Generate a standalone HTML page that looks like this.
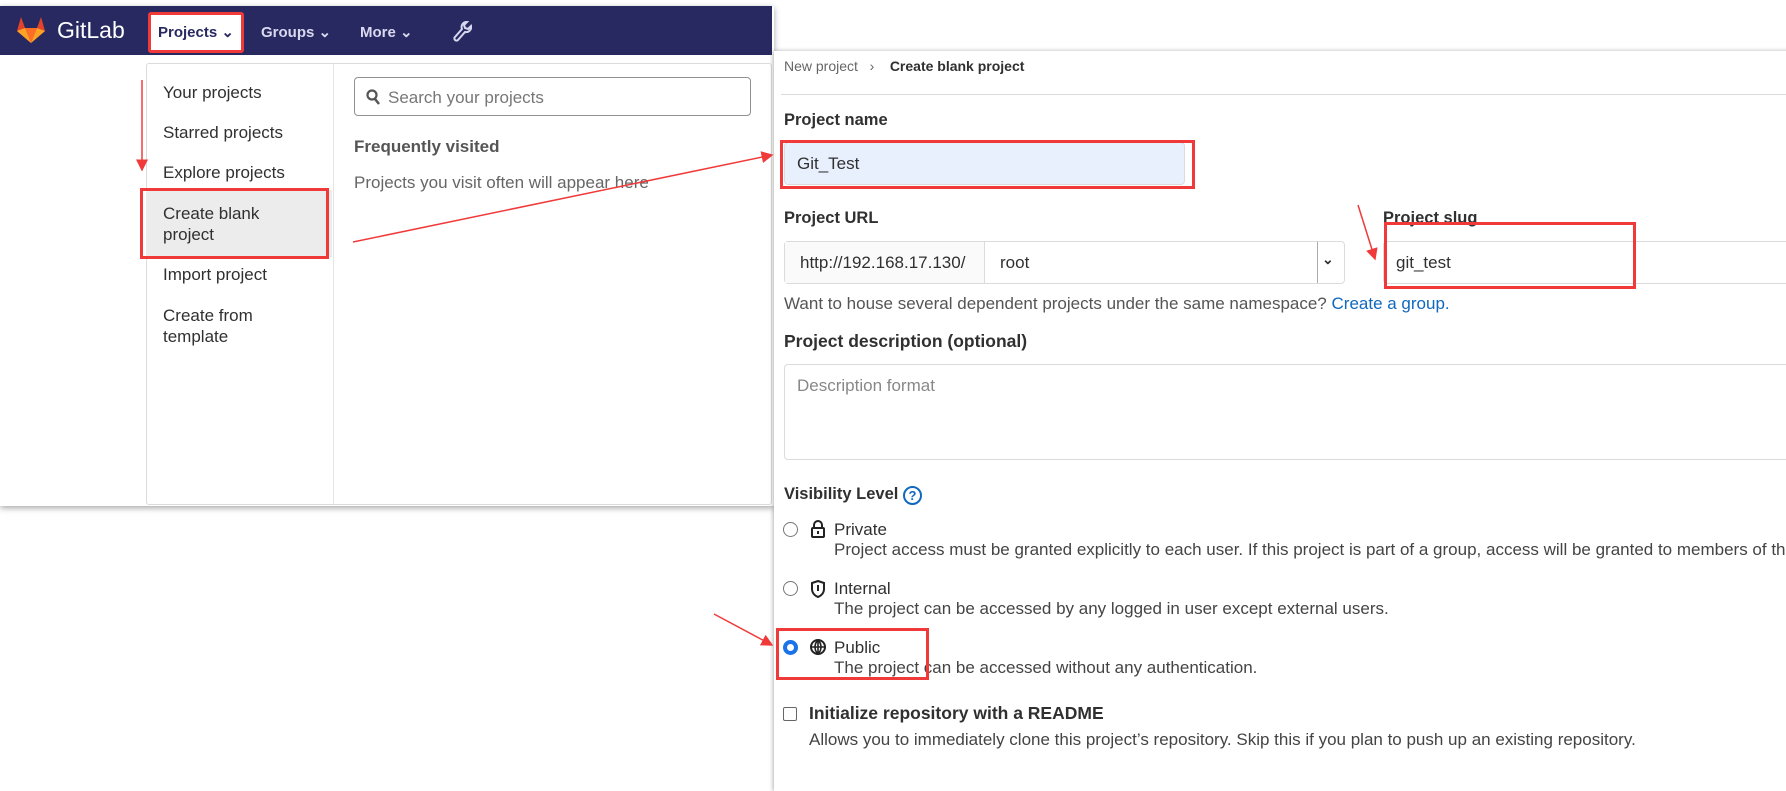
<!DOCTYPE html>
<html><head><meta charset="utf-8"><style>
*{margin:0;padding:0;box-sizing:border-box}
body{width:1786px;height:778px;background:#fff;position:relative;overflow:hidden;font-family:"Liberation Sans",sans-serif;color:#303030;font-size:17px}
.a{position:absolute;white-space:nowrap}
.lw{position:absolute;left:0;top:6px;width:774px;height:500px;background:#fff;box-shadow:0 2px 6px rgba(0,0,0,.35)}
.nav{position:absolute;left:0;top:6px;width:772px;height:49px;background:#292961}
.dd{position:absolute;left:146px;top:63px;width:626px;height:442px;border:1px solid #dbdbdb;border-radius:3px;background:#fff}
.rw{position:absolute;left:774px;top:51px;width:1020px;height:740px;background:#fff;box-shadow:-1px 0 4px rgba(0,0,0,.3)}
.red{position:absolute;border:3px solid #f03a3a}
.in{position:absolute;border:1px solid #dbdbdb;border-radius:4px;background:#fff}
.lbl{font-weight:bold;color:#303030;font-size:16.5px}
.mi{color:#303030;font-size:17px}
.sub{color:#444}
</style></head><body>
<div class="lw"></div>
<div class="nav"></div>
<svg class="a" style="left:16px;top:16px" width="30" height="28" viewBox="0 0 30 28"><path d="M15 27 L1 15 L5 1 L9 12 H21 L25 1 L29 15 Z" fill="#e24329"/><path d="M15 27 L9 12 H21Z" fill="#fc6d26"/><path d="M1 15 L9 12 L15 27Z" fill="#fca326"/><path d="M29 15 L21 12 L15 27Z" fill="#fca326"/></svg>
<div class="a" style="left:57px;top:17px;color:#fff;font-size:23px">GitLab</div>
<div class="a" style="left:148px;top:12px;width:96px;height:41px;background:#fff;border:3px solid #f03a3a;border-radius:3px"></div>
<div class="a" style="left:158px;top:23px;font-size:15px;font-weight:bold;color:#292961">Projects &#8964;</div>
<div class="a" style="left:261px;top:23px;font-size:15px;font-weight:bold;color:#d8d8ef">Groups &#8964;</div>
<div class="a" style="left:360px;top:23px;font-size:15px;font-weight:bold;color:#d8d8ef">More &#8964;</div>
<svg class="a" style="left:452px;top:20px" width="20" height="22" viewBox="0 0 20 22"><path d="M15 2 a5 5 0 0 0 -5 7 L3 17 a2 2 0 0 0 3 3 L13 12 a5 5 0 0 0 6 -6 l-3 3 -3 -1 -1 -3z" fill="none" stroke="#d8d8ef" stroke-width="2"/></svg>
<div class="dd"></div>
<div class="a" style="left:333px;top:64px;width:1px;height:440px;background:#e5e5e5"></div>
<div class="a" style="left:146px;top:190px;width:186px;height:67px;background:#ececec"></div>
<div class="red" style="left:140px;top:188px;width:189px;height:71px"></div>
<div class="a mi" style="left:163px;top:83px">Your projects</div>
<div class="a mi" style="left:163px;top:123px">Starred projects</div>
<div class="a mi" style="left:163px;top:163px">Explore projects</div>
<div class="a mi" style="left:163px;top:203px;line-height:21px">Create blank<br>project</div>
<div class="a mi" style="left:163px;top:265px">Import project</div>
<div class="a mi" style="left:163px;top:305px;line-height:21px">Create from<br>template</div>
<div class="in" style="left:354px;top:77px;width:397px;height:39px;border-color:#919191"></div>
<svg class="a" style="left:366px;top:89px" width="14" height="16" viewBox="0 0 14 16"><circle cx="6" cy="6" r="4.5" fill="none" stroke="#555" stroke-width="2.2"/><path d="M9 10 L13 15" stroke="#555" stroke-width="2.5"/></svg>
<div class="a" style="left:388px;top:88px;color:#777">Search your projects</div>
<div class="a" style="left:354px;top:137px;font-weight:bold;color:#555">Frequently visited</div>
<div class="a" style="left:354px;top:173px;color:#666">Projects you visit often will appear here</div>

<div class="rw"></div>
<div class="a" style="left:784px;top:58px;font-size:14px;color:#666">New project &nbsp;&nbsp;›&nbsp;&nbsp;&nbsp; <span style="color:#303030;font-weight:bold">Create blank project</span></div>
<div class="a" style="left:781px;top:94px;width:1010px;height:1px;background:#dbdbdb"></div>
<div class="a lbl" style="left:784px;top:111px">Project name</div>
<div class="in" style="left:784px;top:142px;width:401px;height:43px;background:#e8f0fe"></div>
<div class="a" style="left:797px;top:154px;color:#303030">Git_Test</div>
<div class="red" style="left:780px;top:140px;width:415px;height:49px"></div>
<div class="a lbl" style="left:784px;top:209px">Project URL</div>
<div class="a lbl" style="left:1383px;top:209px">Project slug</div>
<div class="in" style="left:784px;top:241px;width:561px;height:43px"></div>
<div class="a" style="left:785px;top:242px;width:200px;height:41px;background:#fafafa;border-right:1px solid #dbdbdb"></div>
<div class="a" style="left:800px;top:253px">http://192.168.17.130/</div>
<div class="a" style="left:1000px;top:253px">root</div>
<div class="a" style="left:1317px;top:242px;width:1px;height:41px;background:#aaa"></div>
<div class="a" style="left:1322px;top:251px;font-size:14px;font-weight:bold">&#8964;</div>
<div class="in" style="left:1383px;top:241px;width:420px;height:43px"></div>
<div class="a" style="left:1396px;top:253px">git_test</div>
<div class="red" style="left:1384px;top:222px;width:252px;height:67px"></div>
<div class="a" style="left:784px;top:294px;color:#555">Want to house several dependent projects under the same namespace? <span style="color:#1068bf">Create a group.</span></div>
<div class="a lbl" style="left:784px;top:331px;font-size:17.5px">Project description (optional)</div>
<div class="in" style="left:784px;top:364px;width:1020px;height:96px"></div>
<div class="a" style="left:797px;top:376px;color:#888">Description format</div>
<div class="a lbl" style="left:784px;top:485px">Visibility Level <span style="display:inline-block;width:19px;height:19px;border:2px solid #1068bf;border-radius:50%;color:#1068bf;font-size:13px;text-align:center;line-height:15px;vertical-align:-1px">?</span></div>

<div class="a" style="left:783px;top:522px;width:15px;height:15px;border:1px solid #777;border-radius:50%"></div>
<svg class="a" style="left:810px;top:520px" width="16" height="18" viewBox="0 0 16 18"><path d="M4 8 V5 a4 4 0 0 1 8 0 V8" fill="none" stroke="#222" stroke-width="2"/><rect x="2" y="8" width="12" height="9" rx="1" fill="none" stroke="#222" stroke-width="2"/><rect x="7" y="11" width="2" height="3" fill="#222"/></svg>
<div class="a" style="left:834px;top:520px">Private</div>
<div class="a sub" style="left:834px;top:540px">Project access must be granted explicitly to each user. If this project is part of a group, access will be granted to members of the group.</div>
<div class="a" style="left:783px;top:581px;width:15px;height:15px;border:1px solid #777;border-radius:50%"></div>
<svg class="a" style="left:810px;top:580px" width="16" height="18" viewBox="0 0 16 18"><path d="M8 1 L14 3 V9 C14 13 11 16 8 17 C5 16 2 13 2 9 V3Z" fill="none" stroke="#222" stroke-width="2"/><path d="M8 5 V11" stroke="#222" stroke-width="2"/></svg>
<div class="a" style="left:834px;top:579px">Internal</div>
<div class="a sub" style="left:834px;top:599px">The project can be accessed by any logged in user except external users.</div>
<div class="a" style="left:783px;top:640px;width:15px;height:15px;border:4px solid #1a73e8;border-radius:50%;background:#fff"></div>
<svg class="a" style="left:809px;top:638px" width="18" height="18" viewBox="0 0 18 18"><circle cx="9" cy="9" r="7" fill="none" stroke="#222" stroke-width="2"/><path d="M2 9H16M9 2V16M9 2C5 6 5 12 9 16M9 2C13 6 13 12 9 16" fill="none" stroke="#222" stroke-width="1.6"/></svg>
<div class="a" style="left:834px;top:638px">Public</div>
<div class="a sub" style="left:834px;top:658px">The project can be accessed without any authentication.</div>
<div class="red" style="left:776px;top:628px;width:153px;height:52px"></div>
<div class="a" style="left:783px;top:707px;width:14px;height:14px;border:1px solid #666;border-radius:2px"></div>
<div class="a lbl" style="left:809px;top:703px;font-size:17.5px">Initialize repository with a README</div>
<div class="a sub" style="left:809px;top:730px">Allows you to immediately clone this project’s repository. Skip this if you plan to push up an existing repository.</div>

<svg class="a" style="left:0;top:0" width="1786" height="778">
<defs><marker id="m" markerWidth="8" markerHeight="8" refX="7" refY="4" orient="auto"><path d="M0 0 L8 4 L0 8Z" fill="#f03a3a"/></marker></defs>
<line x1="142" y1="80" x2="142" y2="170" stroke="#f03a3a" stroke-width="1.5" marker-end="url(#m)"/>
<line x1="353" y1="242" x2="772" y2="155" stroke="#f03a3a" stroke-width="1.5" marker-end="url(#m)"/>
<line x1="1358" y1="205" x2="1375" y2="259" stroke="#f03a3a" stroke-width="1.5" marker-end="url(#m)"/>
<line x1="714" y1="614" x2="772" y2="645" stroke="#f03a3a" stroke-width="1.5" marker-end="url(#m)"/>
</svg>
</body></html>
